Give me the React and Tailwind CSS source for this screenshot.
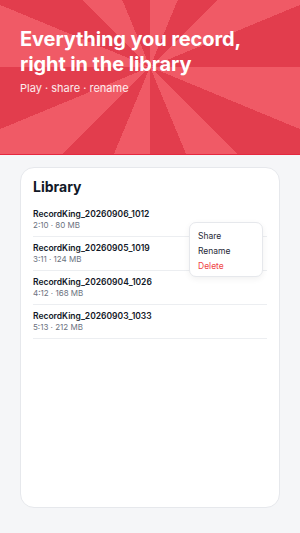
const recordings = [
  { name: 'RecordKing_20260906_1012', meta: '2:10 · 80 MB' },
  { name: 'RecordKing_20260905_1019', meta: '3:11 · 124 MB' },
  { name: 'RecordKing_20260904_1026', meta: '4:12 · 168 MB' },
  { name: 'RecordKing_20260903_1033', meta: '5:13 · 212 MB' },
];

export default function App() {
  return (
    <div className="w-[300px] h-[533px] overflow-hidden bg-[#f5f6f8] flex flex-col font-['Inter',sans-serif]">
      {/* sunburst hero */}
      <header className="h-[155px] shrink-0 border-b border-[#e5283f] bg-[image:repeating-conic-gradient(at_150px_67px,#f05a66_0deg_22.5deg,#e23d4d_22.5deg_45deg)] px-5 pt-[27px]">
        <h1 className="text-[20px] leading-[25px] font-bold text-white tracking-[-0.1px]">
          Everything you record,
          <br />
          right in the library
        </h1>
        <p className="mt-[4px] text-[11px] leading-[14px] text-white/90">Play · share · rename</p>
      </header>

      <main className="flex-1 px-5 pt-3 pb-[25px]">
        <div className="relative h-full rounded-[14px] border border-[#e6e8ec] bg-white px-3 pt-[10px]">
          <h2 className="text-[14px] leading-[18px] font-bold text-[#111827]">Library</h2>
          <ul className="mt-[7px]">
            {recordings.map((r) => (
              <li key={r.name} className="border-b border-[#eceef1] pt-[5px] pb-[5px]">
                <div className="text-[8.5px] leading-[12px] font-semibold text-[#111827]">{r.name}</div>
                <div className="text-[8px] leading-[11px] text-[#6b7280]">{r.meta}</div>
              </li>
            ))}
          </ul>

          {/* context menu */}
          <div className="absolute right-[16px] top-[54px] w-[74px] rounded-[7px] border border-[#e6e8ec] bg-white pl-2 pt-[6px] pb-[2px] shadow-[0_2px_6px_rgba(0,0,0,0.06)]">
            <div className="text-[8.5px] leading-[15px] text-[#1f2937]">Share</div>
            <div className="text-[8.5px] leading-[15px] text-[#1f2937]">Rename</div>
            <div className="text-[8.5px] leading-[15px] text-[#ef4444]">Delete</div>
          </div>
        </div>
      </main>
    </div>
  );
}
